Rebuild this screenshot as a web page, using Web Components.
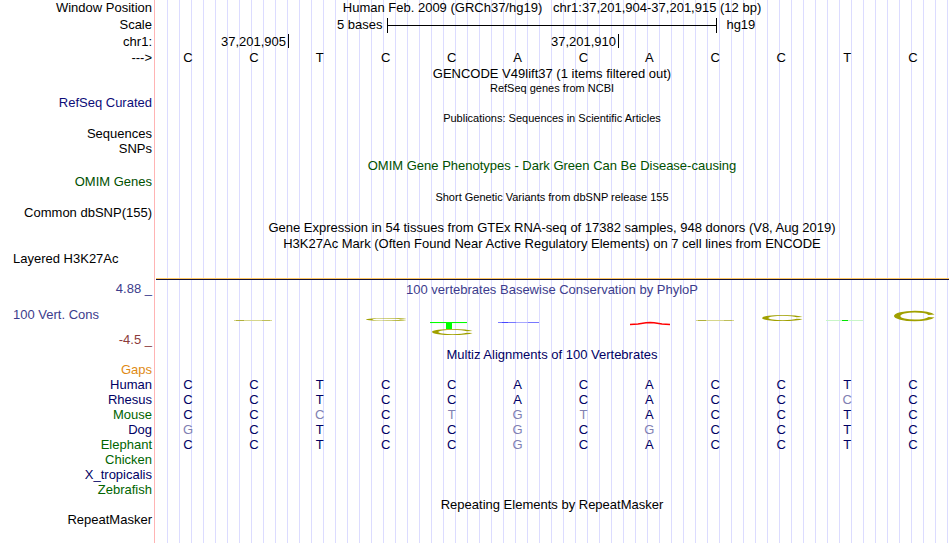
<!DOCTYPE html>
<html lang="en">
<head>
<meta charset="utf-8">
<title>Human chr1:37,201,904-37,201,915</title>
<style>
  body {
    margin: 0;
    background: #fff;
    font-family: "Liberation Sans", Arial, sans-serif;
    font-size: 13px;
  }
</style>
</head>
<body>
<genome-browser></genome-browser>

<script>
const browserTemplate = document.createElement('template')
browserTemplate.innerHTML = `
    <style>
        :host {
            display: flex;
            flex-direction: column;
            box-sizing: border-box;
            min-height: 100vh;
            padding-right: 1px;
            color: #000;
            background:
                linear-gradient(#ffb4b4, #ffb4b4) 154px 0 / 1px 100% no-repeat,
                repeating-linear-gradient(to right, transparent 0 11px, #dcdcff 11px 12px) 156px 0 no-repeat;
        }
        .signal {
            height: 27px;
            margin-left: 1px;
            border-bottom: 1px solid #ffc864;
        }
        .baseline {
            height: 1px;
            margin-left: 1px;
            background: #14143c;
        }
    </style>
    <track-row size="16" label="Window Position">Human Feb. 2009 (GRCh37/hg19)&nbsp;&nbsp; chr1:37,201,904-37,201,915 (12 bp)</track-row>
    <track-row size="18" label="Scale"><scale-bar label="5 bases" assembly="hg19"></scale-bar></track-row>
    <track-row size="16" label="chr1:"><coord-ticks ticks="3:37,201,905 8:37,201,910"></coord-ticks></track-row>
    <track-row size="16" label="--->"><base-row bases="CCTCCACACCTC"></base-row></track-row>
    <track-row size="15">GENCODE V49lift37 (1 items filtered out)</track-row>
    <track-row size="15" dense>RefSeq genes from NCBI</track-row>
    <track-row size="14" label="RefSeq Curated" color="#0c0c78"></track-row>
    <track-row size="16" dense>Publications: Sequences in Scientific Articles</track-row>
    <track-row size="15" label="Sequences"></track-row>
    <track-row size="16" label="SNPs"></track-row>
    <track-row size="18" color="#005000">OMIM Gene Phenotypes - Dark Green Can Be Disease-causing</track-row>
    <track-row size="13" label="OMIM Genes" color="#005000"></track-row>
    <track-row size="18" dense>Short Genetic Variants from dbSNP release 155</track-row>
    <track-row size="13" label="Common dbSNP(155)"></track-row>
    <track-row size="18">Gene Expression in 54 tissues from GTEx RNA-seq of 17382 samples, 948 donors (V8, Aug 2019)</track-row>
    <track-row size="14">H3K27Ac Mark (Often Found Near Active Regulatory Elements) on 7 cell lines from ENCODE</track-row>
    <track-row label="Layered H3K27Ac" wide><div class="signal"></div><div class="baseline"></div></track-row>
    <conservation-track></conservation-track>
    <track-row size="16" color="#000064">Multiz Alignments of 100 Vertebrates</track-row>
    <track-row size="14" label="Gaps" color="#e08a14"></track-row>
    <track-row size="15" label="Human" color="#000064"><base-row bases="CCTCCACACCTC"></base-row></track-row>
    <track-row size="15" label="Rhesus" color="#000064"><base-row bases="CCTCCACACCcC"></base-row></track-row>
    <track-row size="15" label="Mouse" color="#006400"><base-row bases="CCcCtgtACCTC"></base-row></track-row>
    <track-row size="15" label="Dog" color="#000064"><base-row bases="gCTCCgCgCCTC"></base-row></track-row>
    <track-row size="15" label="Elephant" color="#006400"><base-row bases="CCTCCgCACCTC"></base-row></track-row>
    <track-row size="15" label="Chicken" color="#006400"></track-row>
    <track-row size="15" label="X_tropicalis" color="#000064"></track-row>
    <track-row size="15" label="Zebrafish" color="#006400"></track-row>
    <track-row size="16">Repeating Elements by RepeatMasker</track-row>
    <track-row size="14" label="RepeatMasker"></track-row>
`

class GenomeBrowser extends HTMLElement {
  constructor() {
    super()
    this.attachShadow({ mode: 'open' }).appendChild(browserTemplate.content.cloneNode(true))
    // alignment letters are navy whatever the species label colour is
    this.shadowRoot.querySelectorAll('track-row[color] base-row').forEach((row) => {
      row.style.color = '#000064'
    })
  }
}

const rowTemplate = document.createElement('template')
rowTemplate.innerHTML = `
    <style>
        :host {
            display: grid;
            grid-template-columns: 155px 1fr;
            line-height: 15px;
            white-space: nowrap;
        }
        .label {
            padding-right: 3px;
            text-align: right;
        }
        :host([wide]) .label {
            padding-left: 13px;
            text-align: left;
        }
        .data {
            text-align: center;
        }
        :host([dense]) .data {
            font-size: 11px;
        }
    </style>
    <div class="label"></div>
    <div class="data"><slot></slot></div>
`

class TrackRow extends HTMLElement {
  constructor() {
    super()
    this.attachShadow({ mode: 'open' }).appendChild(rowTemplate.content.cloneNode(true))
  }

  connectedCallback() {
    this.shadowRoot.querySelector('.label').textContent = this.getAttribute('label') || ''
    if (this.hasAttribute('size')) {
      this.style.minHeight = `${this.getAttribute('size')}px`
      this.style.lineHeight = `${this.getAttribute('size')}px`
    }
    if (this.hasAttribute('color')) {
      this.style.color = this.getAttribute('color')
    }
  }
}

class ScaleBar extends HTMLElement {
  connectedCallback() {
    if (this.shadowRoot) return
    this.attachShadow({ mode: 'open' }).innerHTML = `
      <style>
        :host {
          display: grid;
          grid-template-columns: 7fr 10fr 7fr;
          align-items: center;
        }
        .left { text-align: right; padding-right: 4px; }
        .right { text-align: left; padding-left: 9px; }
        .bar {
          display: grid;
          align-items: center;
          height: 15px;
          border: solid #000;
          border-width: 0 1px;
        }
        .bar i { height: 1px; background: #000; }
      </style>
      <span class="left">${this.getAttribute('label')}</span>
      <span class="bar"><i></i></span>
      <span class="right">${this.getAttribute('assembly')}</span>
    `
  }
}

class CoordTicks extends HTMLElement {
  connectedCallback() {
    if (this.shadowRoot) return
    const ticks = this.getAttribute('ticks').split(' ').map((tick) => {
      const [column, text] = tick.split(':')
      return `<span style="grid-column: ${column - 2} / ${column}">${text}</span>`
    })
    this.attachShadow({ mode: 'open' }).innerHTML = `
      <style>
        :host {
          display: grid;
          grid-template-columns: repeat(12, 1fr);
          padding-left: 2px;
        }
        span {
          height: 14px;
          border-right: 1px solid #000;
          padding-right: 2px;
          text-align: right;
        }
      </style>
      ${ticks.join('')}
    `
  }
}

// lower case letters are bases that differ from human
class BaseRow extends HTMLElement {
  connectedCallback() {
    if (this.shadowRoot) return
    const cells = [...this.getAttribute('bases')].map((base) => {
      const upper = base.toUpperCase()
      return `<span${base === upper ? '' : ' class="differs"'}>${upper}</span>`
    })
    this.attachShadow({ mode: 'open' }).innerHTML = `
      <style>
        :host {
          display: grid;
          grid-template-columns: repeat(12, 1fr);
          padding-right: 3px;
        }
        .differs { color: #8080b2; }
      </style>
      ${cells.join('')}
    `
  }
}

const MARKS = {
  C: '<circle cx="10.4" cy="10" r="8.8" fill="none" stroke="#a0a000" stroke-width="3.2" pathLength="100" stroke-dasharray="0 5 90 5"/>',
  T: '<rect x="-1" width="18.5" height="3" fill="#00ff00"/><rect x="7" width="3" height="20" fill="#00ff00"/>',
  A: '<polyline points="0,17 4,13 8,5 10,3 12,5 16,13 20,17" fill="none" stroke="#ff0000" stroke-width="1.4" vector-effect="non-scaling-stroke"/>',
  c: '<rect x="0" y="0" width="19" height="20" fill="#d6d68c"/><rect x="1" width="4" height="20" fill="#b0b03c"/><rect x="14" width="4" height="20" fill="#bebe5a"/>',
  t: '<rect x="-1" width="18.5" height="20" fill="#c8f5c8"/><rect x="7" width="3" height="20" fill="#00e600"/>',
  a: '<rect x="0" width="20.5" height="20" fill="#7878ff"/><rect x="2" width="3" height="20" fill="#4646ff"/><rect x="9" width="6" height="20" fill="#a8a8ff"/>',
}

// one conservation score, drawn above or below the zero line
class LogoMark extends HTMLElement {
  connectedCallback() {
    if (this.shadowRoot) return
    this.attachShadow({ mode: 'open' }).innerHTML = `
      <style>
        :host { display: block; width: 40px; }
        svg { display: block; width: 100%; overflow: visible; }
      </style>
      <svg viewBox="0 0 20 20" preserveAspectRatio="none" height="${this.getAttribute('height')}">${MARKS[this.getAttribute('mark')]}</svg>
    `
  }
}

const SCORES = [
  {}, { up: ['c1'] }, {}, { up: ['C3'] }, { down: ['T7', 'C6'] }, { down: ['a1'] },
  {}, { down: ['A3'] }, { up: ['c1'] }, { up: ['C6'] }, { up: ['t1'] }, { up: ['C10'] },
]

class ConservationTrack extends HTMLElement {
  connectedCallback() {
    if (this.shadowRoot) return
    const marks = (list = []) => list.map((m) => `<logo-mark mark="${m[0]}" height="${m.slice(1)}"></logo-mark>`).join('')
    const cells = SCORES.map(({ up, down }) => `<div class="up">${marks(up)}</div><div class="down">${marks(down)}</div>`)
    this.attachShadow({ mode: 'open' }).innerHTML = `
      <style>
        :host {
          display: grid;
          grid-template-columns: 155px 1fr;
          padding-top: 1px;
          line-height: 15px;
          color: #3c3c8c;
        }
        .labels {
          display: flex;
          flex-direction: column;
          justify-content: space-between;
          padding-right: 3px;
          text-align: right;
        }
        .name { padding-left: 13px; text-align: left; }
        .low { color: #8c3c3c; }
        .title { padding-top: 1px; text-align: center; }
        .logo {
          display: grid;
          grid-auto-flow: column;
          grid-template-rows: 24px 25px;
          grid-template-columns: repeat(12, 1fr);
          row-gap: 1px;
          padding-right: 2px;
        }
        .logo div {
          display: flex;
          flex-direction: column;
          align-items: center;
        }
        .up { justify-content: flex-end; }
      </style>
      <div class="labels">
        <span>4.88 _</span>
        <span class="name">100 Vert. Cons</span>
        <span class="low">-4.5 _</span>
      </div>
      <div>
        <div class="title">100 vertebrates Basewise Conservation by PhyloP</div>
        <div class="logo">${cells.join('')}</div>
      </div>
    `
  }
}

customElements.define('logo-mark', LogoMark)
customElements.define('base-row', BaseRow)
customElements.define('coord-ticks', CoordTicks)
customElements.define('scale-bar', ScaleBar)
customElements.define('conservation-track', ConservationTrack)
customElements.define('track-row', TrackRow)
customElements.define('genome-browser', GenomeBrowser)
</script>
</body>
</html>
